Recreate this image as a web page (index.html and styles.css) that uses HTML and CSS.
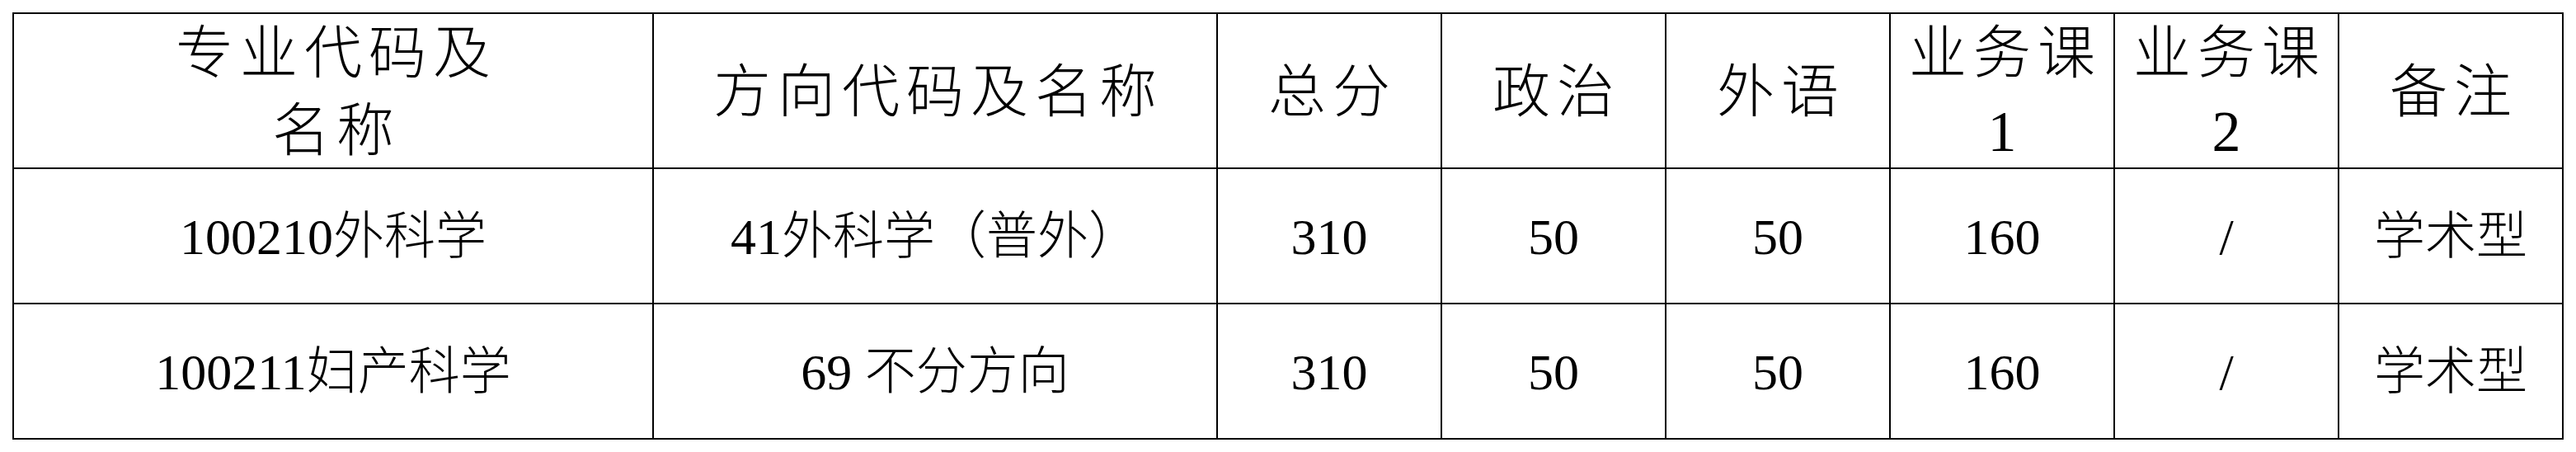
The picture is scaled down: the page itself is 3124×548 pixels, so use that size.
FILE: index.html
```html
<!DOCTYPE html>
<html lang="zh-CN">
<head>
<meta charset="utf-8">
<title>分数线</title>
<link rel="stylesheet" href="styles.css">
</head>
<body>
<div class="score-table">
  <div class="cell head">专业代码及<br>名称</div>
  <div class="cell head">方向代码及名称</div>
  <div class="cell head">总分</div>
  <div class="cell head">政治</div>
  <div class="cell head">外语</div>
  <div class="cell head">业务课<br>1</div>
  <div class="cell head">业务课<br>2</div>
  <div class="cell head">备注</div>

  <div class="cell">100210外科学</div>
  <div class="cell">41外科学（普外）</div>
  <div class="cell">310</div>
  <div class="cell">50</div>
  <div class="cell">50</div>
  <div class="cell">160</div>
  <div class="cell">/</div>
  <div class="cell">学术型</div>

  <div class="cell">100211妇产科学</div>
  <div class="cell">69 不分方向</div>
  <div class="cell">310</div>
  <div class="cell">50</div>
  <div class="cell">50</div>
  <div class="cell">160</div>
  <div class="cell">/</div>
  <div class="cell">学术型</div>
</div>
</body>
</html>
```

FILE: styles.css
```css
html, body {
  margin: 0;
  padding: 0;
  background: #ffffff;
}

body {
  padding: 15px 0 0 15px;
  font-family: "Liberation Serif", "Noto Sans CJK SC", serif;
  color: #000000;
}

.score-table {
  display: grid;
  grid-template-columns: 776px 684px repeat(6, 272px);
  grid-template-rows: 188px 164px 164px;
  width: max-content;
  border-top: 2px solid #000;
  border-left: 2px solid #000;
}

.cell {
  box-sizing: border-box;
  border-right: 2px solid #000;
  border-bottom: 2px solid #000;
  display: flex;
  align-items: center;
  justify-content: center;
  text-align: center;
  font-size: 62px;
  line-height: 1.2;
  font-weight: 300;
  padding-top: 2px;
}

.head {
  font-size: 70px;
  letter-spacing: 8px;
  line-height: 94px;
  padding-top: 6px;
  padding-left: 8px;
}
```
